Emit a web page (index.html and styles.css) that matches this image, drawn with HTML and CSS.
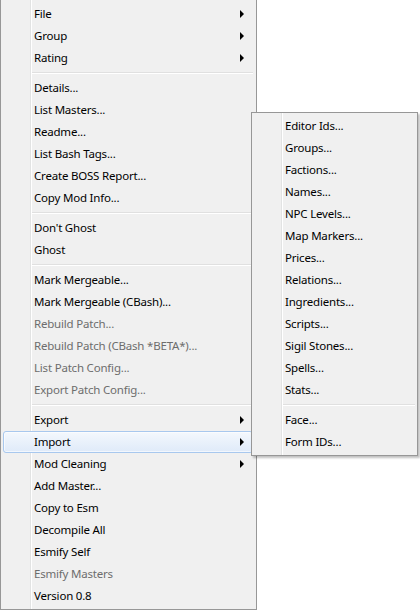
FILE: index.html
```html
<!DOCTYPE html>
<html>
<head>
<meta charset="utf-8">
<link rel="stylesheet" href="styles.css">
</head>
<body>
<div class="menu main">
  <div class="item sub"><span>File</span><i class="arrow"></i></div>
  <div class="item sub"><span>Group</span><i class="arrow"></i></div>
  <div class="item sub"><span>Rating</span><i class="arrow"></i></div>
  <div class="sep"></div>
  <div class="item"><span>Details...</span></div>
  <div class="item"><span>List Masters...</span></div>
  <div class="item"><span>Readme...</span></div>
  <div class="item"><span>List Bash Tags...</span></div>
  <div class="item"><span>Create BOSS Report...</span></div>
  <div class="item"><span>Copy Mod Info...</span></div>
  <div class="sep"></div>
  <div class="item"><span>Don't Ghost</span></div>
  <div class="item"><span>Ghost</span></div>
  <div class="sep"></div>
  <div class="item"><span>Mark Mergeable...</span></div>
  <div class="item"><span>Mark Mergeable (CBash)...</span></div>
  <div class="item disabled"><span>Rebuild Patch...</span></div>
  <div class="item disabled"><span>Rebuild Patch (CBash *BETA*)...</span></div>
  <div class="item disabled"><span>List Patch Config...</span></div>
  <div class="item disabled"><span>Export Patch Config...</span></div>
  <div class="sep"></div>
  <div class="item sub"><span>Export</span><i class="arrow"></i></div>
  <div class="item sub hover"><span>Import</span><i class="arrow"></i></div>
  <div class="item sub"><span>Mod Cleaning</span><i class="arrow"></i></div>
  <div class="item"><span>Add Master...</span></div>
  <div class="item"><span>Copy to Esm</span></div>
  <div class="item"><span>Decompile All</span></div>
  <div class="item"><span>Esmify Self</span></div>
  <div class="item disabled"><span>Esmify Masters</span></div>
  <div class="item"><span>Version 0.8</span></div>
</div>
<div class="menu submenu">
  <div class="item"><span>Editor Ids...</span></div>
  <div class="item"><span>Groups...</span></div>
  <div class="item"><span>Factions...</span></div>
  <div class="item"><span>Names...</span></div>
  <div class="item"><span>NPC Levels...</span></div>
  <div class="item"><span>Map Markers...</span></div>
  <div class="item"><span>Prices...</span></div>
  <div class="item"><span>Relations...</span></div>
  <div class="item"><span>Ingredients...</span></div>
  <div class="item"><span>Scripts...</span></div>
  <div class="item"><span>Sigil Stones...</span></div>
  <div class="item"><span>Spells...</span></div>
  <div class="item"><span>Stats...</span></div>
  <div class="sep"></div>
  <div class="item"><span>Face...</span></div>
  <div class="item"><span>Form IDs...</span></div>
</div>
</body>
</html>
```
FILE: styles.css
```css
html, body {
  margin: 0;
  padding: 0;
  background: #ffffff;
}
body {
  width: 420px;
  height: 610px;
  position: relative;
  overflow: hidden;
  font-family: "Noto Sans", "Open Sans", sans-serif;
  font-size: 11.5px;
  letter-spacing: -0.2px;
  color: #000000;
}
.menu {
  box-sizing: border-box;
  background-color: #f0f0f0;
  background-image: linear-gradient(to right,
    transparent 29px, #e2e3e3 29px, #e2e3e3 30px,
    #ffffff 30px, #ffffff 31px, transparent 31px);
  border: 1px solid #979797;
  display: flex;
  flex-direction: column;
}
.main {
  width: 257px;
  height: 610px;
  border-top: none;
  padding: 3px 3px 2px 2px;
}
.submenu {
  position: absolute;
  left: 251px;
  top: 112px;
  width: 167px;
  padding: 2px 2px 2px 2px;
  box-shadow: 2px 2px 2px rgba(0, 0, 0, 0.25);
}
.item {
  box-sizing: border-box;
  height: 22px;
  display: flex;
  align-items: center;
  padding: 0 8px 0 30px;
  border: 1px solid transparent;
  border-radius: 3px;
  white-space: nowrap;
}
.item span {
  line-height: 16px;
}
.item.disabled {
  color: #6d6d6d;
}
.item.hover {
  border-color: #a8c8ee;
  background: linear-gradient(to bottom, #f4f8fd 0%, #e9f1fb 50%, #dfeaf9 100%);
  box-shadow: inset 0 0 0 1px rgba(255, 255, 255, 0.6);
}
.arrow {
  margin-left: auto;
  width: 0;
  height: 0;
  border-left: 4px solid #000000;
  border-top: 4px solid transparent;
  border-bottom: 4px solid transparent;
}
.sep {
  height: 2px;
  margin: 3px 0 3px 29px;
  background: linear-gradient(to bottom, #e0e0e0 1px, #ffffff 1px);
}
```
